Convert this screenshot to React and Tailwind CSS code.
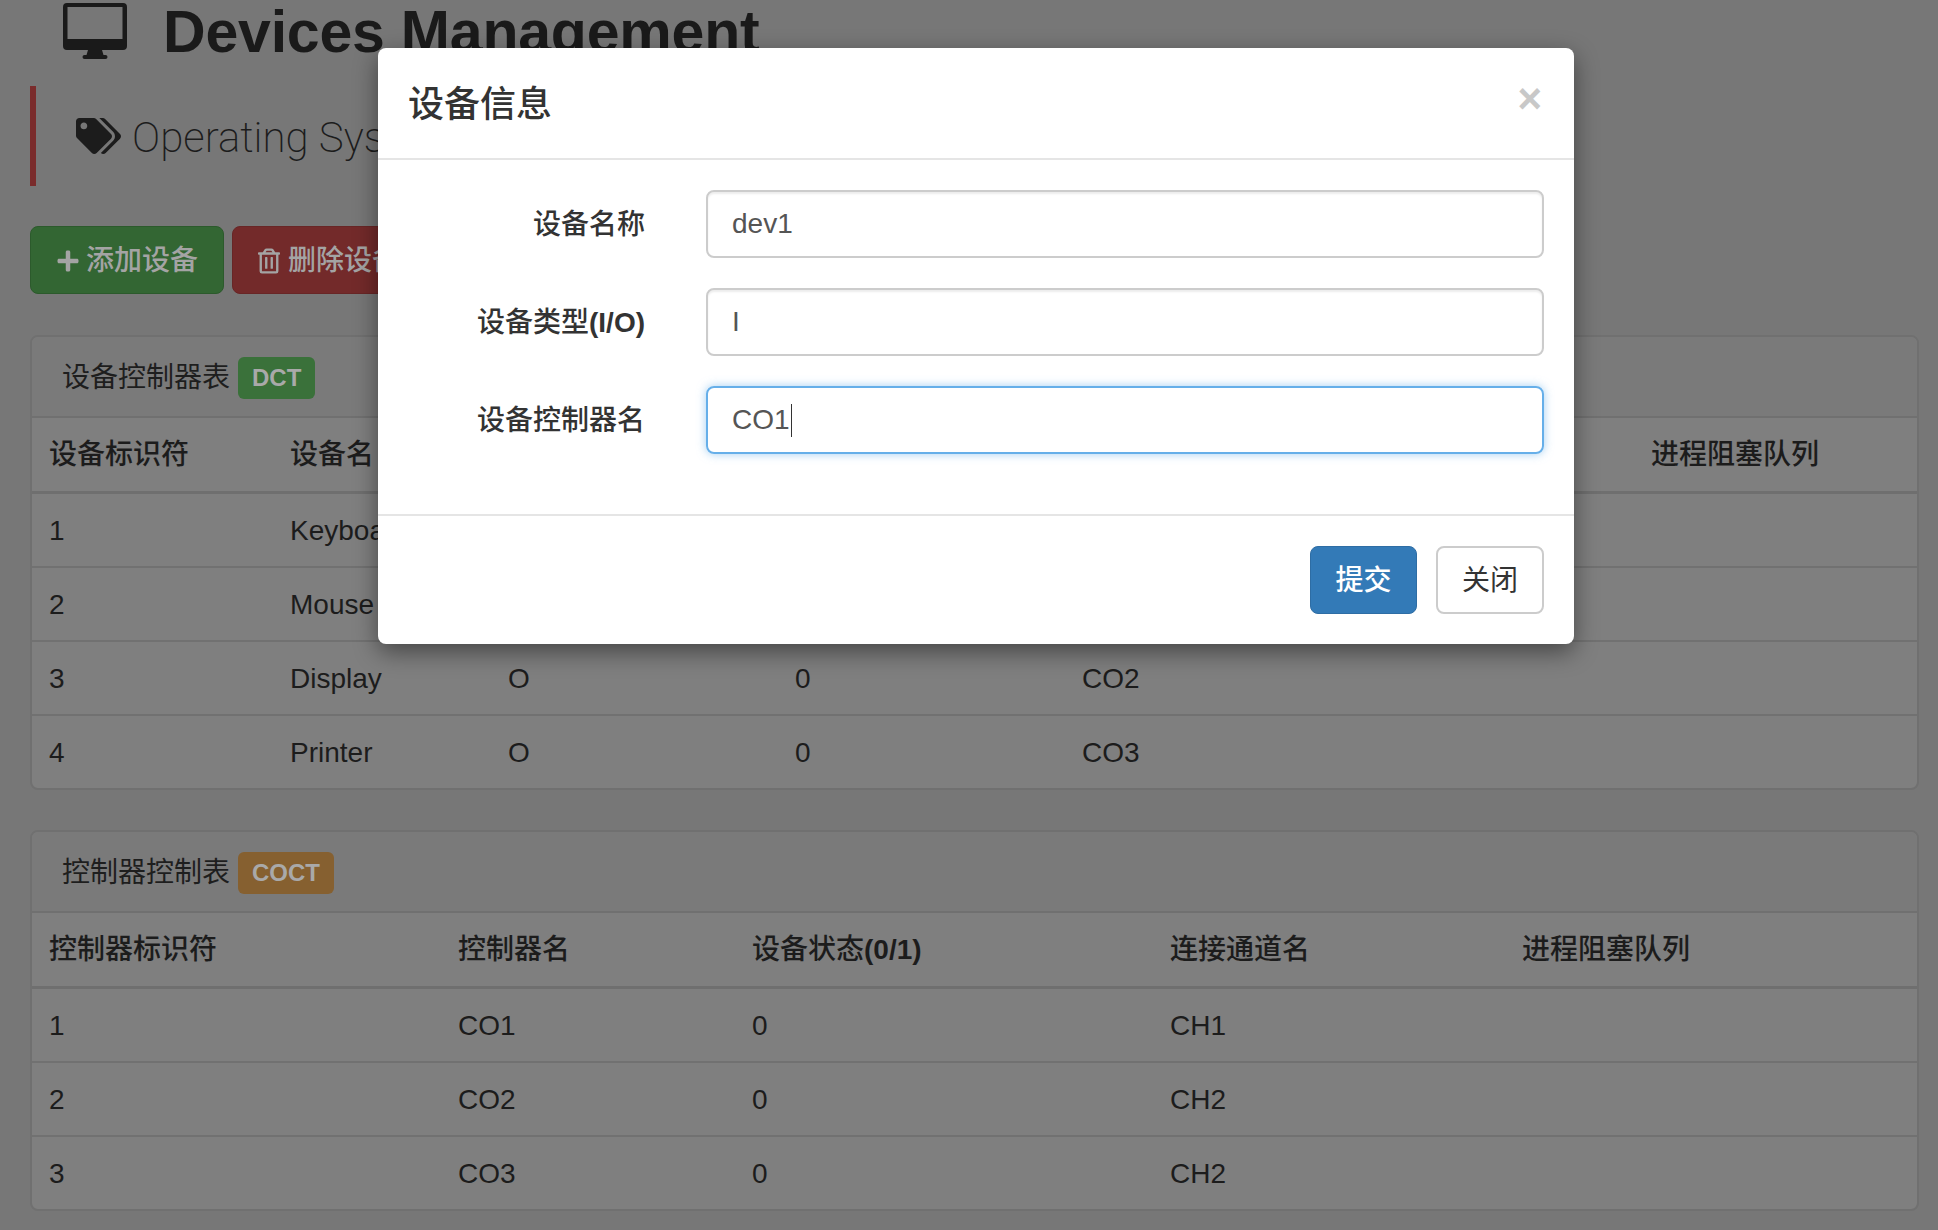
import React from 'react';
import { FaTags, FaPlus, FaRegTrashAlt } from 'react-icons/fa';

const deviceRows = [
  ['1', 'Keyboard', 'I', '0', 'CO1', ''],
  ['2', 'Mouse', 'I', '0', 'CO1', ''],
  ['3', 'Display', 'O', '0', 'CO2', ''],
  ['4', 'Printer', 'O', '0', 'CO3', ''],
];

const controllerRows = [
  ['1', 'CO1', '0', 'CH1', ''],
  ['2', 'CO2', '0', 'CH2', ''],
  ['3', 'CO3', '0', 'CH2', ''],
];

// the latin part of a heading is heavier than the chinese part
const Latin = ({ children }) => <span className="font-bold">{children}</span>;

function DesktopIcon() {
  return (
    <svg viewBox="0 0 64 56" className="w-[64px] h-[56px] shrink-0" fill="currentColor">
      <path
        fillRule="evenodd"
        d="M4 0h56a4 4 0 0 1 4 4v39a4 4 0 0 1-4 4H4a4 4 0 0 1-4-4V4a4 4 0 0 1 4-4zM4.5 4v32h55V4z"
      />
      <path d="M25 47h14l1.5 5h2a1.5 1.5 0 0 1 0 4h-21a1.5 1.5 0 0 1 0-4h2z" />
    </svg>
  );
}

function DataTable({ title, badge, badgeClass, widths, headers, rows, className }) {
  return (
    <div className={`rounded-lg border-2 border-[#707070] bg-[#7f7f7f] overflow-hidden ${className}`}>
      <div className="h-[81px] flex items-center gap-2 pl-[30px] pt-[3px] bg-[#7a7a7a] border-b-2 border-[#707070] text-[28px] text-[#1e1e1e]">
        <span>{title}</span>
        <span className={`h-[42px] px-[14px] flex items-center rounded-md text-[24px] font-bold text-[#a9a9a9] ${badgeClass}`}>{badge}</span>
      </div>
      <table className="w-full table-fixed border-collapse text-[28px] text-[#1c1c1c]">
        <colgroup>
          {widths.map((w, i) => (
            <col key={i} style={{ width: w }} />
          ))}
        </colgroup>
        <thead>
          <tr className="h-[74px] border-b-[3px] border-[#6f6f6f]">
            {headers.map((h, i) => (
              <th key={i} className="pl-[17px] pt-[2px] text-left font-medium">{h}</th>
            ))}
          </tr>
        </thead>
        <tbody>
          {rows.map((row, i) => (
            <tr key={i} className="h-[74px] first:h-[75px] last:h-[73px] border-t-2 border-[#717171] first:border-t-0">
              {row.map((cell, j) => (
                <td key={j} className="pl-[17px] pt-[2px]">{cell}</td>
              ))}
            </tr>
          ))}
        </tbody>
      </table>
    </div>
  );
}

function Field({ label, value, focused }) {
  return (
    <div className="flex items-center h-[68px]">
      <label className="w-[267px] shrink-0 pt-[2px] text-right text-[28px] font-medium text-[#333333]">{label}</label>
      <div
        className={`ml-[61px] flex-1 h-[68px] flex items-center pl-[24px] rounded-lg border-2 text-[28px] text-[#555555] ${
          focused
            ? 'border-[#66afe9] shadow-[0_0_10px_rgba(102,175,233,0.6)]'
            : 'border-[#cccccc] shadow-[inset_0_2px_2px_rgba(0,0,0,0.075)]'
        }`}
      >
        {value}
        {focused && <span className="w-px h-[33px] bg-[#333333] ml-px" />}
      </div>
    </div>
  );
}

function App() {
  return (
    <div className="relative h-[1230px] overflow-hidden bg-[#777777] font-['Liberation_Sans','Noto_Sans_CJK_SC',sans-serif]">
      <div className="pl-[30px] pr-[19px]">
        {/* Page title */}
        <header className="h-[62px] flex items-center pl-[33px] gap-[36px] text-[#1a1a1a]">
          <DesktopIcon />
          <h1 className="pt-[2px] text-[59px] font-bold whitespace-nowrap tracking-[-0.2px]">Devices Management</h1>
        </header>

        {/* Section callout */}
        <div className="mt-[24px] h-[100px] flex items-center gap-[11px] pl-[40px] border-l-[6px] border-[#7a2c2c] text-[#1c1c1c]">
          <FaTags className="w-[45px] h-[38px]" />
          <span className="pt-[2px] text-[42px] font-['Roboto',sans-serif] font-[200] whitespace-nowrap">Operating System</span>
        </div>

        <div className="mt-[40px] flex gap-2">
          <button className="w-[194px] h-[68px] pt-[2px] flex items-center justify-center gap-[6px] rounded-lg bg-[#336633] border border-[#2c5a2c] text-[28px] font-medium text-[#a4a4a4]">
            <FaPlus className="w-[24px] h-[24px]" />
            添加设备
          </button>
          <button className="w-[194px] h-[68px] pt-[2px] flex items-center justify-center gap-[8px] rounded-lg bg-[#732a2a] border border-[#682626] text-[28px] font-medium text-[#a4a4a4]">
            <FaRegTrashAlt className="w-[22px] h-[26px]" />
            删除设备
          </button>
        </div>

        <DataTable
          className="mt-[41px]"
          title="设备控制器表"
          badge="DCT"
          badgeClass="bg-[#3a713a]"
          widths={['241px', '218px', '287px', '287px', '569px', '286px']}
          headers={['设备标识符', '设备名', <>设备类型<Latin>(I/O)</Latin></>, <>设备状态<Latin>(0/1)</Latin></>, '控制器名', '进程阻塞队列']}
          rows={deviceRows}
        />

        <DataTable
          className="mt-[40px]"
          title="控制器控制表"
          badge="COCT"
          badgeClass="bg-[#866030]"
          widths={['409px', '294px', '418px', '352px', '415px']}
          headers={['控制器标识符', '控制器名', <>设备状态<Latin>(0/1)</Latin></>, '连接通道名', '进程阻塞队列']}
          rows={controllerRows}
        />
      </div>

      {/* Modal */}
      <div className="absolute left-[378px] top-[48px] w-[1196px] h-[596px] flex flex-col rounded-lg bg-white shadow-[0_8px_24px_rgba(0,0,0,0.45)]">
        <div className="h-[112px] shrink-0 flex items-center justify-between pl-[30px] pr-[32px] pt-[3px] border-b-2 border-[#e5e5e5]">
          <h4 className="text-[36px] font-medium text-[#333333]">设备信息</h4>
          <span className="-mt-[11px] text-[42px] font-bold leading-none text-[#c8c8c8]">×</span>
        </div>
        <div className="flex-1 flex flex-col gap-[30px] pt-[30px] pr-[30px]">
          <Field label="设备名称" value="dev1" />
          <Field label={<>设备类型<Latin>(I/O)</Latin></>} value="I" />
          <Field label="设备控制器名" value="CO1" focused />
        </div>
        <div className="h-[130px] shrink-0 flex items-center justify-end gap-[19px] pr-[30px] border-t-2 border-[#e5e5e5]">
          <button className="w-[107px] h-[68px] pt-[2px] rounded-lg bg-[#337ab7] border border-[#2e6da4] text-[28px] font-medium text-white">提交</button>
          <button className="w-[108px] h-[68px] pt-[2px] rounded-lg bg-white border-2 border-[#cccccc] text-[28px] text-[#333333]">关闭</button>
        </div>
      </div>
    </div>
  );
}

export default App;
